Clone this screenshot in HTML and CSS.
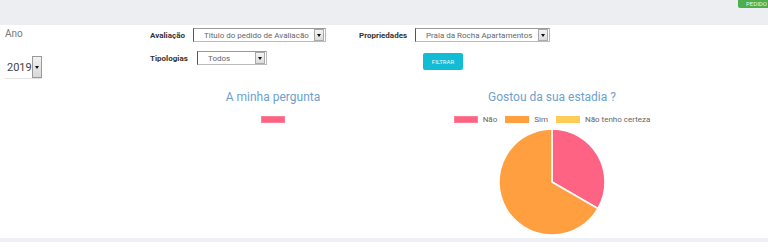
FILE: index.html
```html
<!DOCTYPE html>
<html lang="pt">
<head>
  <meta charset="UTF-8" />
  <meta name="viewport" content="width=device-width, initial-scale=1" />
  <title>Avaliações</title>
  <link rel="stylesheet" href="styles.css">
</head>
<body>

  <div class="topbar">
    <button class="btn-green">PEDIDO</button>
  </div>

  <div class="filters">
    <div class="year-col">
      <div class="year-label">Ano</div>
      <div class="year-select">
        <span>2019</span>
        <span class="arrow big"></span>
      </div>
    </div>

    <div class="filter-grid">
      <label class="f-label">Avaliação</label>
      <div class="select sel-aval">
        <span>Titulo do pedido de Avaliacão</span>
        <span class="arrow"></span>
      </div>
      <label class="f-label">Propriedades</label>
      <div class="select sel-prop">
        <span>Praia da Rocha Apartamentos</span>
        <span class="arrow"></span>
      </div>

      <label class="f-label">Tipologias</label>
      <div class="select sel-tipo">
        <span>Todos</span>
        <span class="arrow"></span>
      </div>
      <div></div>
      <div><button class="btn-filter">FILTRAR</button></div>
    </div>
  </div>

  <div class="charts">
    <div class="chart">
      <h3 class="chart-title">A minha pergunta</h3>
      <div class="legend">
        <span class="box pink"></span>
      </div>
    </div>

    <div class="chart">
      <h3 class="chart-title">Gostou da sua estadia ?</h3>
      <div class="legend">
        <span class="box pink"></span><span class="leg-text">Não</span>
        <span class="box orange"></span><span class="leg-text">Sim</span>
        <span class="box yellow"></span><span class="leg-text">Não tenho certeza</span>
      </div>
      <svg class="pie" width="108" height="108" viewBox="-54 -54 108 108">
        <path d="M0 0 L0 -53 A53 53 0 0 1 45.9 26.5 Z" fill="#ff6384" stroke="#fff" stroke-width="1.5" />
        <path d="M0 0 L45.9 26.5 A53 53 0 1 1 0 -53 Z" fill="#ff9f40" stroke="#fff" stroke-width="1.5" />
      </svg>
    </div>
  </div>

  <div class="bottom-strip"></div>

</body>
</html>
```

FILE: styles.css
```css
html, body {
  margin: 0;
  padding: 0;
}

body {
  font-family: Roboto, 'Liberation Sans', sans-serif;
  background-color: #fff;
  color: #333;
  width: 768px;
  height: 247px;
  overflow: hidden;
}

.topbar {
  height: 25px;
  background-color: #eceef2;
  display: flex;
  justify-content: flex-end;
  align-items: flex-start;
}

.btn-green {
  margin-top: -6px;
  height: 14px;
  width: 30px;
  padding: 0 0 0 8px;
  border: none;
  border-radius: 2px 0 0 2px;
  background-color: #4cae4c;
  color: #e8f5e8;
  font-family: inherit;
  font-size: 6px;
  text-align: left;
  line-height: 20px;
  overflow: hidden;
  white-space: nowrap;
}

.filters {
  display: flex;
  height: 64px;
}

.year-col {
  width: 145px;
  padding-left: 5px;
}

.year-label {
  font-size: 10px;
  color: #777;
  margin-top: 3px;
}

.year-select {
  display: flex;
  align-items: center;
  width: 37px;
  height: 22px;
  margin-top: 17px;
  border-bottom: 1px solid #e3e3e3;
  font-size: 11px;
  color: #444;
}

.year-select span:first-child {
  padding-left: 2px;
  width: 25px;
}

.filter-grid {
  display: grid;
  grid-template-columns: 43px 166px 56px 140px;
  grid-template-rows: 14px 14px;
  row-gap: 9px;
  padding-top: 3px;
  align-items: center;
}

.f-label {
  font-size: 8px;
  font-weight: bold;
  color: #333;
}

.select {
  display: flex;
  align-items: center;
  height: 12px;
  border: 1px solid #bbb;
  border-left-color: #555;
  border-top-color: #999;
  font-size: 8px;
  color: #666;
  background: #fff;
}

.select span:first-child {
  flex: 1;
  padding-left: 10px;
  white-space: nowrap;
  overflow: hidden;
}

.sel-aval {
  width: 131px;
}

.sel-tipo {
  width: 68px;
  margin-left: 4px;
}

.sel-prop {
  width: 133px;
}

.arrow {
  flex: none;
  width: 10px;
  height: 12px;
  margin-right: 1px;
  background: linear-gradient(#f4f4f4, #dcdcdc);
  border: 1px solid #aaa;
  box-sizing: border-box;
  position: relative;
}

.arrow::after {
  content: '';
  position: absolute;
  left: 2px;
  top: 4px;
  border-left: 2px solid transparent;
  border-right: 2px solid transparent;
  border-top: 3px solid #111;
}

.arrow.big {
  height: 22px;
  background: linear-gradient(#f2f2f2, #d8d8d8);
  border-color: #999;
}

.arrow.big::after {
  top: 9px;
}

.btn-filter {
  margin-left: 8px;
  margin-top: 7px;
  width: 40px;
  height: 17px;
  border: none;
  border-radius: 2px;
  background-color: #12bcd4;
  color: #e6fafd;
  font-family: inherit;
  font-size: 6px;
  padding: 0;
}

.charts {
  display: flex;
  padding-left: 140px;
  gap: 13px;
}

.chart {
  width: 266px;
  display: flex;
  flex-direction: column;
  align-items: center;
}

.chart-title {
  margin: 0;
  font-size: 12px;
  font-weight: normal;
  color: #6d9fcf;
  height: 16px;
  line-height: 16px;
}

.legend {
  margin-top: 10px;
  display: flex;
  align-items: center;
  height: 9px;
  font-size: 8px;
  color: #666;
}

.box {
  display: inline-block;
  width: 24px;
  height: 7px;
  box-sizing: border-box;
}

.pink {
  background-color: #ff6384;
  border: 1px solid #ff7f98;
}

.orange {
  background-color: #ff9f40;
}

.yellow {
  background-color: #ffcd56;
}

.leg-text {
  margin: 0 8px 0 5px;
}

.leg-text:last-child {
  margin-right: 0;
}

.pie {
  margin-top: 4px;
}

.bottom-strip {
  position: absolute;
  left: 0;
  right: 0;
  top: 238px;
  height: 4px;
  background-color: #edf1f5;
}
```
